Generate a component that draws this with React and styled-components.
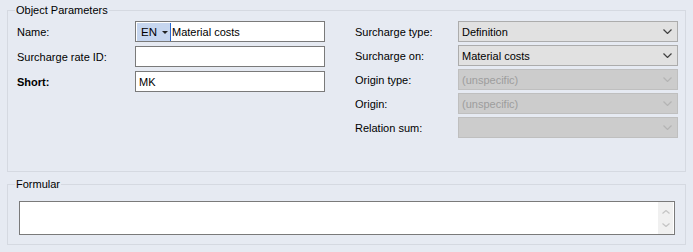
import React from "react"
import styled, { createGlobalStyle } from "styled-components"

const GlobalStyle = createGlobalStyle`
  html, body {
    margin: 0;
    padding: 0;
    background: #e6eaf2;
    overflow: hidden;
  }
  body {
    font-family: "Liberation Sans", Arial, sans-serif;
    font-size: 11px;
    color: #000;
  }
`

function Chevron({ color = "#444", up = false, size = 9 }) {
  const h = Math.round(size / 2)
  return (
    <svg width={size} height={h} viewBox={`0 0 ${size} ${h}`}>
      <polyline
        points={
          up
            ? `0.5,${h - 0.5} ${size / 2},0.5 ${size - 0.5},${h - 0.5}`
            : `0.5,0.5 ${size / 2},${h - 0.5} ${size - 0.5},0.5`
        }
        fill="none"
        stroke={color}
        strokeWidth="1.2"
      />
    </svg>
  )
}

function Select({ value, disabled }) {
  return (
    <SelectBox disabled={disabled}>
      <SelectValue>{value}</SelectValue>
      <Chevron color={disabled ? "#b4b4b4" : "#404040"} />
    </SelectBox>
  )
}

const leftRows = [
  { label: "Name:", kind: "name" },
  { label: "Surcharge rate ID:", value: "" },
  { label: "Short:", value: "MK", bold: true },
]

const rightRows = [
  { label: "Surcharge type:", value: "Definition" },
  { label: "Surcharge on:", value: "Material costs" },
  { label: "Origin type:", value: "(unspecific)", disabled: true },
  { label: "Origin:", value: "(unspecific)", disabled: true },
  { label: "Relation sum:", value: "", disabled: true },
]

function App() {
  return (
    <Page>
      <GlobalStyle />
      <Group>
        <Legend $offset={-2}>Object Parameters</Legend>
        <Columns>
          <Column>
            {leftRows.map((row) => (
              <Row key={row.label}>
                <Label $bold={row.bold} $width={118}>{row.label}</Label>
                {row.kind === "name" ? (
                  <TextBox>
                    <LangButton>
                      EN
                      <Caret />
                    </LangButton>
                    <Cursor />
                    <TextValue>Material costs</TextValue>
                  </TextBox>
                ) : (
                  <TextBox>
                    <TextValue $pad>{row.value}</TextValue>
                  </TextBox>
                )}
              </Row>
            ))}
          </Column>
          <Column $right>
            {rightRows.map((row) => (
              <Row key={row.label}>
                <Label $width={103}>{row.label}</Label>
                <Select value={row.value} disabled={row.disabled} />
              </Row>
            ))}
          </Column>
        </Columns>
      </Group>
      <Group $second>
        <Legend $offset={-4}>Formular</Legend>
        <FormulaBox>
          <FormulaText />
          <ScrollBar>
            <Chevron color="#c4c4c4" up size={8} />
            <Chevron color="#c4c4c4" size={8} />
          </ScrollBar>
        </FormulaBox>
      </Group>
    </Page>
  )
}

export default App

const Page = styled.div`
  width: 693px;
  height: 252px;
  padding-top: 4px;
  box-sizing: border-box;
`
const Group = styled.fieldset`
  margin: ${(p) => (p.$second ? "6px 7px 0" : "0 7px")};
  padding: ${(p) => (p.$second ? "10px 10px 9px 11px" : "4px 7px 33px 9px")};
  border: 1px solid #d5d9e1;
  min-width: 0;
  box-sizing: border-box;
`
const Legend = styled.legend`
  margin-left: ${(p) => p.$offset}px;
  padding: 0 1px;
  line-height: 13px;
  font-size: 11px;
`
const Columns = styled.div`
  display: flex;
  gap: 30px;
`
const Column = styled.div`
  display: flex;
  flex-direction: column;
  gap: ${(p) => (p.$right ? "3px" : "4px")};
`
const Row = styled.div`
  display: flex;
  align-items: center;
  height: 21px;
`
const Label = styled.div`
  width: ${(p) => p.$width}px;
  flex: none;
  font-weight: ${(p) => (p.$bold ? "bold" : "normal")};
  white-space: nowrap;
`
const TextBox = styled.div`
  width: 190px;
  height: 21px;
  box-sizing: border-box;
  border: 1px solid #7a7a7a;
  background: #fff;
  display: flex;
  align-items: center;
`
const LangButton = styled.div`
  height: 18px;
  width: 33px;
  margin-left: 1px;
  background: #c6d6ef;
  display: flex;
  align-items: center;
  padding-left: 4px;
  box-sizing: border-box;
  gap: 5px;
  font-size: 11.5px;
`
const Caret = styled.span`
  width: 0;
  height: 0;
  border-left: 3px solid transparent;
  border-right: 3px solid transparent;
  border-top: 3px solid #222;
  margin-top: 1px;
`
const Cursor = styled.div`
  width: 1px;
  height: 18px;
  background: #2a6ad0;
`
const TextValue = styled.span`
  padding-left: ${(p) => (p.$pad ? "3px" : "1px")};
  white-space: nowrap;
`
const SelectBox = styled.div`
  width: 220px;
  height: 21px;
  box-sizing: border-box;
  border: 1px solid ${(p) => (p.disabled ? "#bfbfbf" : "#acacac")};
  background: ${(p) => (p.disabled ? "#cccccc" : "#e1e1e1")};
  color: ${(p) => (p.disabled ? "#9d9d9d" : "#000")};
  display: flex;
  align-items: center;
  justify-content: space-between;
  padding: 0 5px 0 3px;
`
const SelectValue = styled.span`
  white-space: nowrap;
`
const FormulaBox = styled.div`
  height: 34px;
  box-sizing: border-box;
  border: 1px solid #7a7a7a;
  background: #fff;
  display: flex;
`
const FormulaText = styled.div`
  flex: 1;
`
const ScrollBar = styled.div`
  width: 15px;
  margin-right: 1px;
  background: #f0f0f0;
  display: flex;
  flex-direction: column;
  align-items: center;
  justify-content: space-around;
  padding: 3px 0;
  box-sizing: border-box;
`
